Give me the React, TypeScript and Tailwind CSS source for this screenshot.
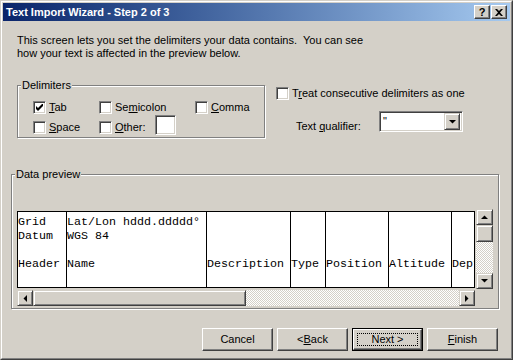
import type { ReactNode } from 'react';

const raised =
  'border border-t-white border-l-white border-r-[#404040] border-b-[#404040] shadow-[inset_-1px_-1px_0_#808080]';
const scrollPart =
  'border border-t-[#d4d0c8] border-l-[#d4d0c8] border-r-[#404040] border-b-[#404040] shadow-[inset_1px_1px_0_#ffffff,inset_-1px_-1px_0_#808080] bg-[#d4d0c8]';
const sunken =
  'border border-t-[#808080] border-l-[#808080] border-r-white border-b-white shadow-[inset_1px_1px_0_#404040,inset_-1px_-1px_0_#d4d0c8] bg-white';
const hatch =
  'bg-[image:repeating-conic-gradient(#ffffff_0_25%,#d4d0c8_0_50%)] [background-size:2px_2px]';

function Arrow({ dir }: { dir: 'up' | 'down' | 'left' | 'right' }) {
  const pts = {
    up: '0,4 7,4 3.5,0.5',
    down: '0,0 7,0 3.5,3.5',
    left: '4,0 4,7 0.5,3.5',
    right: '0,0 0,7 3.5,3.5',
  }[dir];
  const vertical = dir === 'up' || dir === 'down';
  return (
    <svg width={vertical ? 7 : 4} height={vertical ? 4 : 7} viewBox={vertical ? '0 0 7 4' : '0 0 4 7'}>
      <polygon points={pts} fill="#000" />
    </svg>
  );
}

function CheckBox({ checked, children, className }: { checked?: boolean; children: ReactNode; className?: string }) {
  return (
    <div className={`flex items-center h-[13px] ${className ?? ''}`}>
      <div className={`w-[13px] h-[13px] shrink-0 flex items-center justify-center ${sunken}`}>
        {checked && (
          <svg width="7" height="7" viewBox="0 0 7 7">
            <polygon points="0,2 2,4 7,-1 7,2 2,7 0,5" fill="#000" />
          </svg>
        )}
      </div>
      <span className="ml-[3px] leading-[13px] whitespace-nowrap">{children}</span>
    </div>
  );
}

function GroupBox({ label, className, children }: { label: string; className: string; children: ReactNode }) {
  return (
    <div className={`relative border border-[#808080] shadow-[inset_1px_1px_0_#ffffff,1px_1px_0_#ffffff] ${className}`}>
      <span className="absolute left-[3px] top-[-7px] px-[1px] bg-[#d4d0c8] leading-[13px]">{label}</span>
      {children}
    </div>
  );
}

const columns = [
  { w: 'w-[49px] border-r', lines: ['Grid', 'Datum', '', 'Header'] },
  { w: 'w-[140px] border-r', lines: ['Lat/Lon hddd.ddddd°', 'WGS 84', '', 'Name'] },
  { w: 'w-[84px] border-r', lines: ['', '', '', 'Description'] },
  { w: 'w-[35px] border-r', lines: ['', '', '', 'Type'] },
  { w: 'w-[63px] border-r', lines: ['', '', '', 'Position'] },
  { w: 'w-[63px] border-r', lines: ['', '', '', 'Altitude'] },
  { w: 'flex-1', lines: ['', '', '', 'Depth'] },
];

function Button({ children, isDefault }: { children: ReactNode; isDefault?: boolean }) {
  if (isDefault) {
    return (
      <div className="w-[71px] h-[23px] border border-black">
        <div className={`h-full flex items-center justify-center p-[3px] ${raised}`}>
          <div className="w-full h-full border border-dotted border-black flex items-center justify-center">
            {children}
          </div>
        </div>
      </div>
    );
  }
  return <div className={`w-[71px] h-[23px] flex items-center justify-center ${raised}`}>{children}</div>;
}

export default function App() {
  return (
    <div className="w-[513px] h-[360px] bg-[#d4d0c8] border border-t-[#d4d0c8] border-l-[#d4d0c8] border-r-[#404040] border-b-[#404040] font-['Liberation_Sans',Arial,sans-serif] text-[11px] text-black">
      <div className="h-full flex flex-col p-px border border-t-white border-l-white border-r-[#808080] border-b-[#808080]">
        {/* title bar */}
        <div className="h-[18px] flex items-center pl-[3px] pr-[3px] bg-gradient-to-r from-[#0a246a] to-[#a6caf0]">
          <span className="text-white font-bold text-[11px] leading-[13px]">Text Import Wizard - Step 2 of 3</span>
          <div className="ml-auto flex">
            <div className={`w-[16px] h-[14px] flex items-center justify-center bg-[#d4d0c8] font-bold text-[11px] leading-none ${raised}`}>
              ?
            </div>
            <div className={`ml-px w-[16px] h-[14px] flex items-center justify-center bg-[#d4d0c8] ${raised}`}>
              <svg width="8" height="7" viewBox="0 0 8 7">
                <path d="M0 0h2l2 2 2-2h2L5 3.5 8 7H6L4 5 2 7H0l3-3.5z" fill="#000" />
              </svg>
            </div>
          </div>
        </div>

        {/* intro */}
        <div className="mt-[13px] pl-[14px] leading-[13px] whitespace-pre">
          {'This screen lets you set the delimiters your data contains.  You can see\nhow your text is affected in the preview below.'}
        </div>

        {/* delimiters + options */}
        <div className="mt-[25px] pl-[14px] flex items-start">
          <GroupBox label="Delimiters" className="w-[248px] h-[53px] pt-[15px] pl-[15px]">
            <div className="flex">
              <CheckBox checked className="w-[66px]">
                <u>T</u>ab
              </CheckBox>
              <CheckBox className="w-[96px]">
                Se<u>m</u>icolon
              </CheckBox>
              <CheckBox>
                <u>C</u>omma
              </CheckBox>
            </div>
            <div className="mt-[7px] flex items-start">
              <CheckBox className="w-[66px]">
                <u>S</u>pace
              </CheckBox>
              <CheckBox className="w-[56px]">
                <u>O</u>ther:
              </CheckBox>
              <div className={`w-[21px] h-[20px] -mt-[6px] ${sunken}`} />
            </div>
          </GroupBox>

          <div className="ml-[11px] mt-[2px] flex flex-col">
            <CheckBox>
              T<u>r</u>eat consecutive delimiters as one
            </CheckBox>
            <div className="mt-[11px] pl-[20px] flex items-start">
              <span className="w-[83px] mt-[9px] leading-[13px]">
                Text <u>q</u>ualifier:
              </span>
              <div className={`w-[84px] h-[21px] flex items-center pl-[3px] pr-[2px] ${sunken}`}>
                <span className="leading-[13px]">"</span>
                <div className={`ml-auto w-[16px] h-[17px] flex items-center justify-center ${scrollPart}`}>
                  <Arrow dir="down" />
                </div>
              </div>
            </div>
          </div>
        </div>

        {/* data preview */}
        <div className="mt-[36px] pl-[8px]">
          <GroupBox label="Data preview" className="w-[488px] h-[135px] pt-[34px] pl-[5px]">
            <div className="flex items-start">
              <div className="mt-[2px] w-[458px] h-[77px] border border-black bg-white flex overflow-hidden font-['Liberation_Mono','Courier_New',monospace] text-[11.67px] leading-[14px]">
                {columns.map((c, i) => (
                  <div key={i} className={`${c.w} h-full border-black pt-[3px] overflow-hidden whitespace-pre`}>
                    {c.lines.map((l, j) => (
                      <div key={j} className="h-[14px]">
                        {l}
                      </div>
                    ))}
                  </div>
                ))}
              </div>
              <div className="ml-[1px] w-[17px] h-[80px] flex flex-col">
                <div className={`h-[16px] flex items-center justify-center ${scrollPart}`}>
                  <Arrow dir="up" />
                </div>
                <div className={`h-[17px] ${scrollPart}`} />
                <div className={`flex-1 ${hatch}`} />
                <div className={`h-[16px] flex items-center justify-center ${scrollPart}`}>
                  <Arrow dir="down" />
                </div>
              </div>
            </div>
            <div className="mt-[1px] w-[458px] h-[16px] flex">
              <div className={`w-[16px] flex items-center justify-center ${scrollPart}`}>
                <Arrow dir="left" />
              </div>
              <div className={`w-[213px] ${scrollPart}`} />
              <div className={`flex-1 ${hatch}`} />
              <div className={`w-[16px] flex items-center justify-center ${scrollPart}`}>
                <Arrow dir="right" />
              </div>
            </div>
          </GroupBox>
        </div>

        {/* buttons */}
        <div className="mt-[19px] pr-[12px] flex justify-end gap-[4px]">
          <Button>Cancel</Button>
          <Button>
            &lt; <u>B</u>ack
          </Button>
          <Button isDefault>Next &gt;</Button>
          <Button>
            <u>F</u>inish
          </Button>
        </div>
      </div>
    </div>
  );
}
